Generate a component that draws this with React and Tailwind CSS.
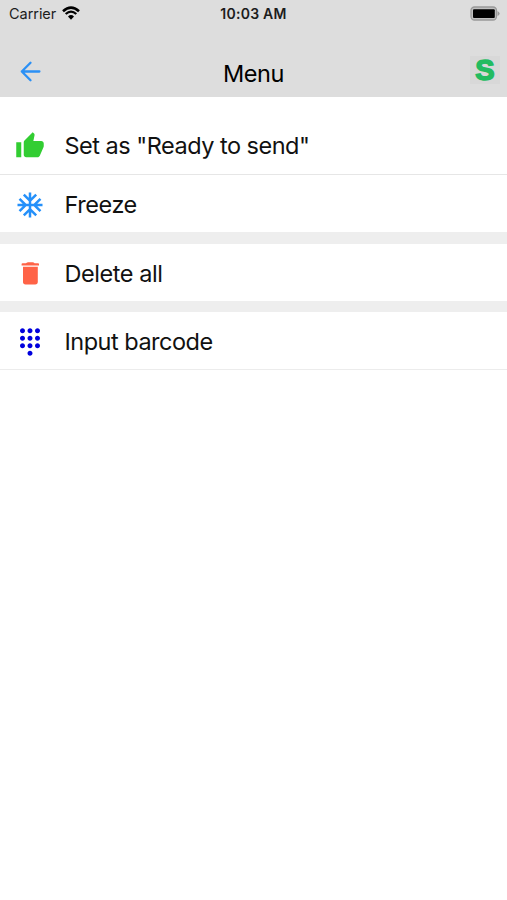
import { MdAcUnit, MdDialpad, MdThumbUp } from "react-icons/md";

const TrashIcon = ({ size, className }) => {
  return (
    <svg width={size} height={size} viewBox="0 0 30 30" fill="currentColor" className={className}>
      <path d="M6.6 5 Q6.6 4.2 7.6 4.2 H11 Q12 3.2 13.2 3.2 H17.6 Q18.8 3.2 19.6 4.2 H23 Q24 4.2 24 5 V6.5 H6.6 Z" />
      <path d="M8 7.8 H22.8 V22.8 Q22.8 25.4 20.2 25.4 H10.6 Q8 25.4 8 22.8 Z" />
    </svg>
  );
};

const StatusBar = () => {
  return (
    <div className="grid h-7 grid-cols-3 items-center text-[#1c1c1c]">
      <div className="flex items-center gap-[6px] pl-[9px]">
        <span className="text-[14.5px] leading-7 tracking-[-0.05px]">Carrier</span>
        <svg width="18" height="14" viewBox="0 0 18 14" fill="none" className="-mt-[2px]">
          <path d="M1 5.2 Q9 -2 17 5.2" stroke="#000" strokeWidth="2.6" />
          <path d="M3.7 8 Q9 3.2 14.3 8" stroke="#000" strokeWidth="2.3" />
          <path d="M6 10.5 Q9 7.7 12 10.5 L9 13.7 Z" fill="#000" />
        </svg>
      </div>
      <span className="text-center text-[14px] font-semibold leading-7 tracking-[0.25px]">10:03 AM</span>
      <div className="flex justify-end pr-[7px]">
        <svg width="30" height="15" viewBox="0 0 30 15" className="-mt-[2px]">
          <rect x="1" y="1" width="25.5" height="13" rx="3.5" fill="#c0c0c0" stroke="#999" strokeWidth="1.3" />
          <rect x="3" y="3.2" width="21.8" height="8.8" rx="1" fill="#000" />
          <path d="M27.5 5 Q29.6 6 29.6 7.5 Q29.6 9 27.5 10 Z" fill="#999" />
        </svg>
      </div>
    </div>
  );
};

const Header = () => {
  return (
    <header className="h-[97px] bg-[#dddddd]">
      <StatusBar />
      <div className="grid h-[69px] grid-cols-3 items-start pt-[28px]">
        <button className="ml-[20px] mt-[5px] w-fit" aria-label="Back">
          <svg width="21" height="21" viewBox="0 0 21 21" fill="none" stroke="#2b90f5" strokeWidth="2.3" strokeLinecap="round" strokeLinejoin="round">
            <path d="M10.5 1.8 L1.8 10.5 L10.5 19.2 M1.8 10.5 H19.4" />
          </svg>
        </button>
        <h1 className="pt-[2px] text-center text-[23.5px] leading-8 tracking-[-0.4px] text-black">Menu</h1>
        <div className="mr-[7px] flex h-[28px] w-[30px] items-center justify-center justify-self-end bg-[#d8d8d8]">
          <span className="font-['Liberation_Sans',sans-serif] text-[29px] font-bold leading-[28px] text-[#22bb60] [-webkit-text-stroke:1.5px_#22bb60]">
            S
          </span>
        </div>
      </div>
    </header>
  );
};

const MenuItem = ({ icon: Icon, iconClass, label, className }) => {
  return (
    <button className={`flex w-full items-center bg-white pl-[15px] text-left ${className}`}>
      <Icon size={30} className={iconClass} />
      <span className="ml-[19.5px] text-[23.5px] leading-8">{label}</span>
    </button>
  );
};

export default function App() {
  return (
    <div className="min-h-screen bg-white font-[Inter,sans-serif] text-[#111]">
      <Header />
      <main className="pt-[19px]">
        <MenuItem
          icon={MdThumbUp}
          iconClass="text-[#32cd32]"
          label={'Set as "Ready to send"'}
          className="h-[59px] border-b border-[#e6e6e6] pt-[2px] tracking-[-0.5px]"
        />
        <MenuItem icon={MdAcUnit} iconClass="text-[#2490fa]" label="Freeze" className="h-[57px] pt-[3px] tracking-[-0.45px]" />
        <div className="h-3 bg-[#eeeeee]" />
        <MenuItem icon={TrashIcon} iconClass="text-[#ff6347]" label="Delete all" className="h-[57px] pt-[2px] tracking-[-0.45px]" />
        <div className="h-[11px] bg-[#eeeeee]" />
        <MenuItem
          icon={MdDialpad}
          iconClass="text-[#0000dd]"
          label="Input barcode"
          className="h-[58px] border-b border-[#ececec] pt-[2px] tracking-[-0.5px]"
        />
      </main>
    </div>
  );
}
